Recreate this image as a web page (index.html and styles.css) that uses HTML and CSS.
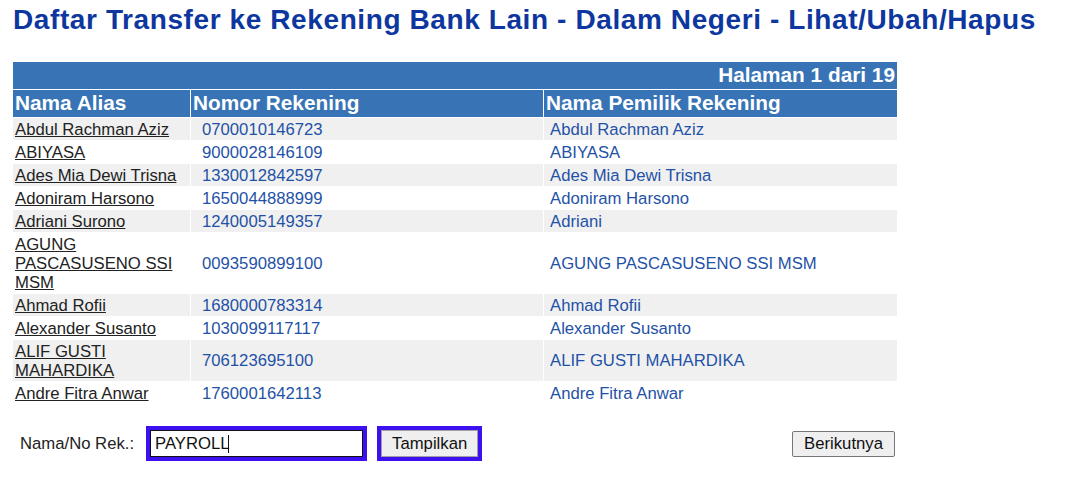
FILE: index.html
```html
<!DOCTYPE html>
<html lang="id">
<head>
<meta charset="utf-8">
<title>Daftar Transfer ke Rekening Bank Lain</title>
<link rel="stylesheet" href="styles.css">
</head>
<body>
<div class="page">
  <h1 class="title">Daftar Transfer ke Rekening Bank Lain - Dalam Negeri - Lihat/Ubah/Hapus</h1>
  <table class="list">
    <colgroup>
      <col class="c1"><col class="c2"><col class="c3">
    </colgroup>
    <tr class="pager"><th colspan="3">Halaman 1 dari 19</th></tr>
    <tr class="head"><th>Nama Alias</th><th>Nomor Rekening</th><th>Nama Pemilik Rekening</th></tr>
    <tr class="odd"><td class="alias"><a href="#">Abdul Rachman Aziz</a></td><td class="num">0700010146723</td><td class="owner">Abdul Rachman Aziz</td></tr>
    <tr><td class="alias"><a href="#">ABIYASA</a></td><td class="num">9000028146109</td><td class="owner">ABIYASA</td></tr>
    <tr class="odd"><td class="alias"><a href="#">Ades Mia Dewi Trisna</a></td><td class="num">1330012842597</td><td class="owner">Ades Mia Dewi Trisna</td></tr>
    <tr><td class="alias"><a href="#">Adoniram Harsono</a></td><td class="num">1650044888999</td><td class="owner">Adoniram Harsono</td></tr>
    <tr class="odd"><td class="alias"><a href="#">Adriani Surono</a></td><td class="num">1240005149357</td><td class="owner">Adriani</td></tr>
    <tr><td class="alias"><a href="#">AGUNG PASCASUSENO SSI MSM</a></td><td class="num">0093590899100</td><td class="owner">AGUNG PASCASUSENO SSI MSM</td></tr>
    <tr class="odd"><td class="alias"><a href="#">Ahmad Rofii</a></td><td class="num">1680000783314</td><td class="owner">Ahmad Rofii</td></tr>
    <tr><td class="alias"><a href="#">Alexander Susanto</a></td><td class="num">1030099117117</td><td class="owner">Alexander Susanto</td></tr>
    <tr class="odd"><td class="alias"><a href="#">ALIF GUSTI MAHARDIKA</a></td><td class="num">706123695100</td><td class="owner">ALIF GUSTI MAHARDIKA</td></tr>
    <tr><td class="alias"><a href="#">Andre Fitra Anwar</a></td><td class="num">1760001642113</td><td class="owner">Andre Fitra Anwar</td></tr>
  </table>
  <form class="search" onsubmit="return false">
    <div class="search-left">
      <label class="search-label" for="q">Nama/No Rek.:</label>
      <span class="field focused"><input id="q" class="search-input" type="text" value="PAYROLL"><span class="caret"></span></span>
      <span class="focused btn-wrap"><button type="button" class="btn btn-show">Tampilkan</button></span>
    </div>
    <button type="button" class="btn btn-next">Berikutnya</button>
  </form>
</div>
</body>
</html>
```
FILE: styles.css
```css
html, body {
  margin: 0;
  padding: 0;
  background: #ffffff;
}

body {
  font-family: "Liberation Sans", Arial, sans-serif;
  font-size: 16.7px;
  color: #222222;
}

.page {
  padding: 5px 0 0 12px;
}

.title {
  margin: 0 0 0 1px;
  font-size: 28px;
  line-height: 30px;
  letter-spacing: 0.6px;
  font-weight: bold;
  color: #0d379f;
  white-space: nowrap;
}

.list {
  margin-top: 26px;
  border-collapse: separate;
  border-spacing: 1px;
  width: 886px;
  table-layout: fixed;
}

.c1 { width: 177px; }
.c2 { width: 352px; }
.c3 { width: 353px; }

.list th {
  background: #3874b5;
  color: #ffffff;
  font-weight: bold;
  font-size: 20.8px;
  line-height: 24px;
  padding: 1px 2px 2px;
  text-align: left;
  white-space: nowrap;
}

.list .pager th {
  text-align: right;
}

.list td {
  padding: 1.5px 2px;
  line-height: 19px;
  vertical-align: middle;
}

.list tr.odd td {
  background: #f0f0f0;
}

.alias a {
  color: #222222;
  text-decoration: underline;
}

.num {
  color: #1f52a6;
  padding-left: 11px !important;
}

.owner {
  color: #1f52a6;
  padding-left: 6px !important;
}

.search {
  margin-top: 21px;
  width: 884px;
  margin-left: 1px;
  display: flex;
  justify-content: space-between;
  align-items: center;
}

.search-left {
  display: flex;
  align-items: center;
}

.search-label {
  margin-left: 7px;
  margin-right: 12px;
  color: #222222;
}

.focused {
  display: flex;
  border: 4px solid #3c10f0;
}

.field {
  position: relative;
  margin-right: 10px;
}

.search-input {
  box-sizing: border-box;
  width: 213px;
  height: 27px;
  border: 1px solid #111111;
  padding: 0 4px;
  font-family: "Liberation Sans", Arial, sans-serif;
  font-size: 16.7px;
  color: #111111;
  background: #ffffff;
  margin: 0;
  outline: none;
}

.caret {
  position: absolute;
  left: 78px;
  top: 5px;
  width: 1px;
  height: 18px;
  background: #111111;
}

.btn {
  box-sizing: border-box;
  height: 27px;
  padding: 0 10px;
  background: #efefef;
  border: 1px solid #767676;
  border-radius: 2px;
  font-family: "Liberation Sans", Arial, sans-serif;
  font-size: 16.7px;
  color: #111111;
  margin: 0;
}

.btn-show {
  width: 97px;
  border-radius: 0;
  border-color: #a0a0a0;
}

.btn-next {
  height: 26px;
  width: 103px;
  margin-right: 2px;
}
```
